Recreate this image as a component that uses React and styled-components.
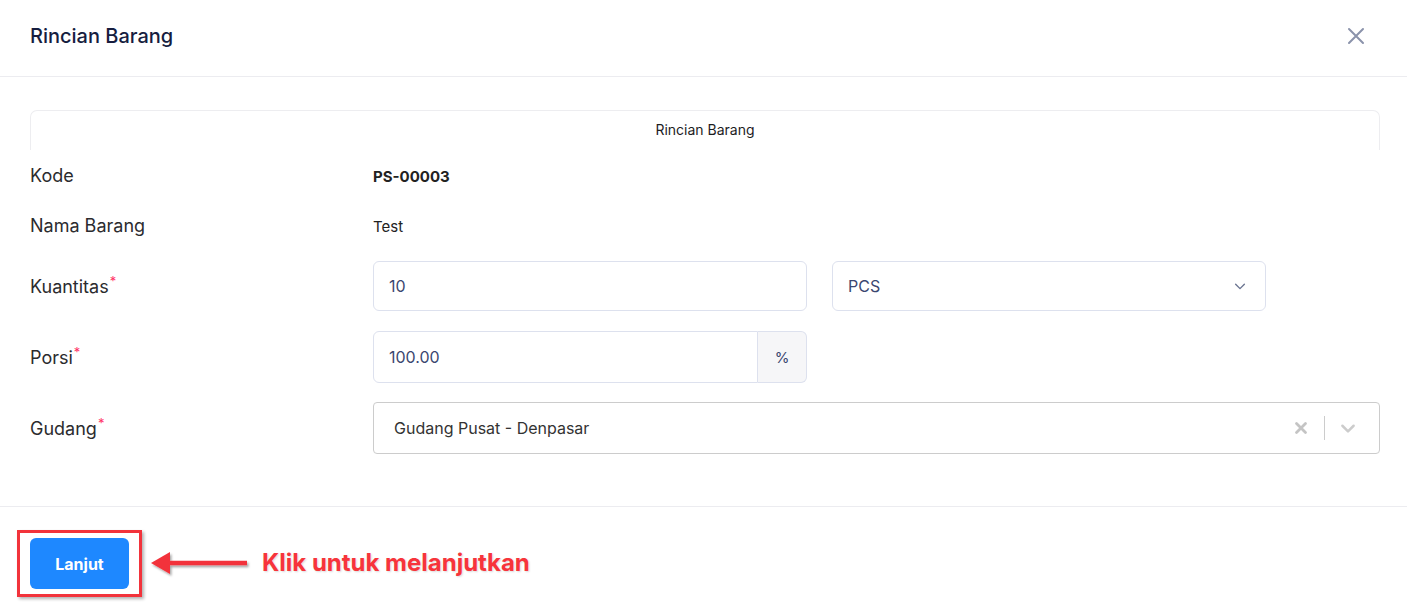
import React from "react";
import styled, { createGlobalStyle } from "styled-components";

const GlobalStyle = createGlobalStyle`
  * { box-sizing: border-box; }
  body {
    margin: 0;
    background: #ffffff;
    font-family: Inter, "Noto Sans", sans-serif;
  }
`;

const Modal = styled.div`
  width: 1407px;
  height: 616px;
  background: #fff;
  display: flex;
  flex-direction: column;
  overflow: hidden;
`;

const Header = styled.div`
  height: 77px;
  padding: 22px 30px 0 30px;
  border-bottom: 1px solid #ececf0;
  display: flex;
  justify-content: space-between;
  align-items: flex-start;
`;

const Title = styled.h2`
  margin: 0;
  font-size: 20px;
  line-height: 28px;
  font-weight: 500;
  color: #161d3f;
`;

const CloseButton = styled.button`
  border: none;
  background: none;
  padding: 0;
  margin-top: 5px;
  margin-right: 12px;
  width: 18px;
  height: 18px;
  display: flex;
  color: #8b93ab;
`;

const Body = styled.div`
  padding: 33px 27px 52px 30px;
  border-bottom: 1px solid #ececf0;
`;

const Card = styled.div`
  height: 40px;
  border: 1px solid #ededf0;
  border-bottom: none;
  border-radius: 7px 7px 0 0;
  display: flex;
  justify-content: center;
  padding-top: 10px;
  font-size: 14px;
  line-height: 18px;
  color: #1d1d1f;
  margin-bottom: 11px;
`;

const Row = styled.div`
  display: flex;
  align-items: center;
  min-height: ${({ $h }) => $h}px;
  margin-bottom: ${({ $mb = 20 }) => $mb}px;
  &:last-child { margin-bottom: 0; }
`;

const Label = styled.div`
  width: 343px;
  flex-shrink: 0;
  font-size: 18px;
  color: #2b2b2e;
  margin-top: -2px;
`;

const Required = styled.span`
  color: #ff3366;
  font-size: 13px;
  vertical-align: 7px;
  margin-left: 1px;
`;

const Value = styled.div`
  font-size: 15px;
  color: #222;
  font-weight: ${({ $bold }) => ($bold ? 700 : 400)};
`;

const Fields = styled.div`
  display: flex;
  gap: 25px;
`;

const Input = styled.div`
  width: ${({ $w }) => $w}px;
  height: ${({ $h }) => $h}px;
  border: 1px solid #dde1ee;
  border-radius: 6px;
  display: flex;
  align-items: center;
  justify-content: space-between;
  padding: 0 18px 0 15px;
  font-size: 16px;
  color: #3b4770;
  background: #fff;
`;

const Group = styled.div`
  display: flex;
`;

const GroupInput = styled(Input)`
  border-radius: 6px 0 0 6px;
`;

const Addon = styled.div`
  width: 49px;
  height: 52px;
  border: 1px solid #dde1ee;
  border-left: none;
  border-radius: 0 6px 6px 0;
  background: #f6f6f8;
  display: flex;
  align-items: center;
  justify-content: center;
  font-size: 15px;
  color: #3b4770;
`;

const SelectBox = styled.div`
  flex: 1;
  height: 52px;
  border: 1px solid #cccccc;
  border-radius: 4px;
  display: flex;
  align-items: center;
  padding: 0 8px 0 20px;
  font-size: 16px;
  color: #333;
`;

const SelectValue = styled.div`
  flex: 1;
`;

const Indicators = styled.div`
  display: flex;
  align-items: center;
  color: #cccccc;
`;

const Indicator = styled.div`
  width: 46px;
  display: flex;
  justify-content: center;
`;

const Separator = styled.span`
  width: 1px;
  height: 24px;
  background: #cccccc;
`;

const Footer = styled.div`
  flex: 1;
  display: flex;
  align-items: flex-start;
  padding: 23px 0 0 17px;
`;

const Highlight = styled.div`
  border: 3px solid #f2333b;
  padding: 5px 10px;
  box-shadow: 2px 2px 3px rgba(0, 0, 0, 0.3);
`;

const PrimaryButton = styled.button`
  width: 99px;
  height: 51px;
  border: none;
  border-radius: 6px;
  background: #1e88ff;
  color: #fff;
  font-family: Inter, sans-serif;
  font-weight: 700;
  font-size: 16px;
`;

const Arrow = styled.svg`
  margin: 22px 0 0 9px;
  overflow: visible;
`;

const Note = styled.div`
  margin: 18px 0 0 13px;
  font-family: Inter, "Liberation Sans", sans-serif;
  font-weight: 700;
  font-size: 24px;
  line-height: 30px;
  color: #f7343b;
  text-shadow: 1px 1px 2px rgba(0, 0, 0, 0.15);
`;

const Chevron = ({ color = "currentColor", size = 14, sw = 1.6 }) => (
  <svg width={size} height={size} viewBox="0 0 16 16" fill="none">
    <path d="M3 6 L8 11 L13 6" stroke={color} strokeWidth={sw} strokeLinecap="round" strokeLinejoin="round" />
  </svg>
);

export default function App() {
  return (
    <>
      <GlobalStyle />
      <Modal>
        <Header>
          <Title>Rincian Barang</Title>
          <CloseButton aria-label="close">
            <svg width="18" height="18" viewBox="0 0 18 18" fill="none">
              <path d="M2 2 L16 16 M16 2 L2 16" stroke="currentColor" strokeWidth="2" strokeLinecap="round" />
            </svg>
          </CloseButton>
        </Header>
        <Body>
          <Card>Rincian Barang</Card>
          <Row $h={30}>
            <Label>Kode</Label>
            <Value $bold>PS-00003</Value>
          </Row>
          <Row $h={30}>
            <Label>Nama Barang</Label>
            <Value>Test</Value>
          </Row>
          <Row $h={50}>
            <Label>
              Kuantitas<Required>*</Required>
            </Label>
            <Fields>
              <Input $w={434} $h={50}>10</Input>
              <Input $w={434} $h={50}>
                PCS
                <Chevron color="#6b7591" />
              </Input>
            </Fields>
          </Row>
          <Row $h={52} $mb={19}>
            <Label>
              Porsi<Required>*</Required>
            </Label>
            <Group>
              <GroupInput $w={385} $h={52}>100.00</GroupInput>
              <Addon>%</Addon>
            </Group>
          </Row>
          <Row $h={52}>
            <Label>
              Gudang<Required>*</Required>
            </Label>
            <SelectBox>
              <SelectValue>Gudang Pusat - Denpasar</SelectValue>
              <Indicators>
                <Indicator>
                  <svg width="14" height="14" viewBox="0 0 14 14">
                    <path d="M2.5 2.5 L11.5 11.5 M11.5 2.5 L2.5 11.5" stroke="#c4c4c4" strokeWidth="2.8" strokeLinecap="round" />
                  </svg>
                </Indicator>
                <Separator />
                <Indicator>
                  <Chevron color="#cccccc" size={18} sw={2.2} />
                </Indicator>
              </Indicators>
            </SelectBox>
          </Row>
        </Body>
        <Footer>
          <Highlight>
            <PrimaryButton>Lanjut</PrimaryButton>
          </Highlight>
          <Arrow width="98" height="22" viewBox="0 0 98 22">
            <defs>
              <filter id="shadow" x="-20%" y="-50%" width="140%" height="200%">
                <feDropShadow dx="1.5" dy="2" stdDeviation="1.2" floodColor="#000" floodOpacity="0.35" />
              </filter>
            </defs>
            <g filter="url(#shadow)">
              <path d="M18 8.8 H96 V13.2 H18 Z" fill="#f2333b" />
              <path d="M0 11 L19 0 L19 22 Z" fill="#f2333b" />
            </g>
          </Arrow>
          <Note>Klik untuk melanjutkan</Note>
        </Footer>
      </Modal>
    </>
  );
}
